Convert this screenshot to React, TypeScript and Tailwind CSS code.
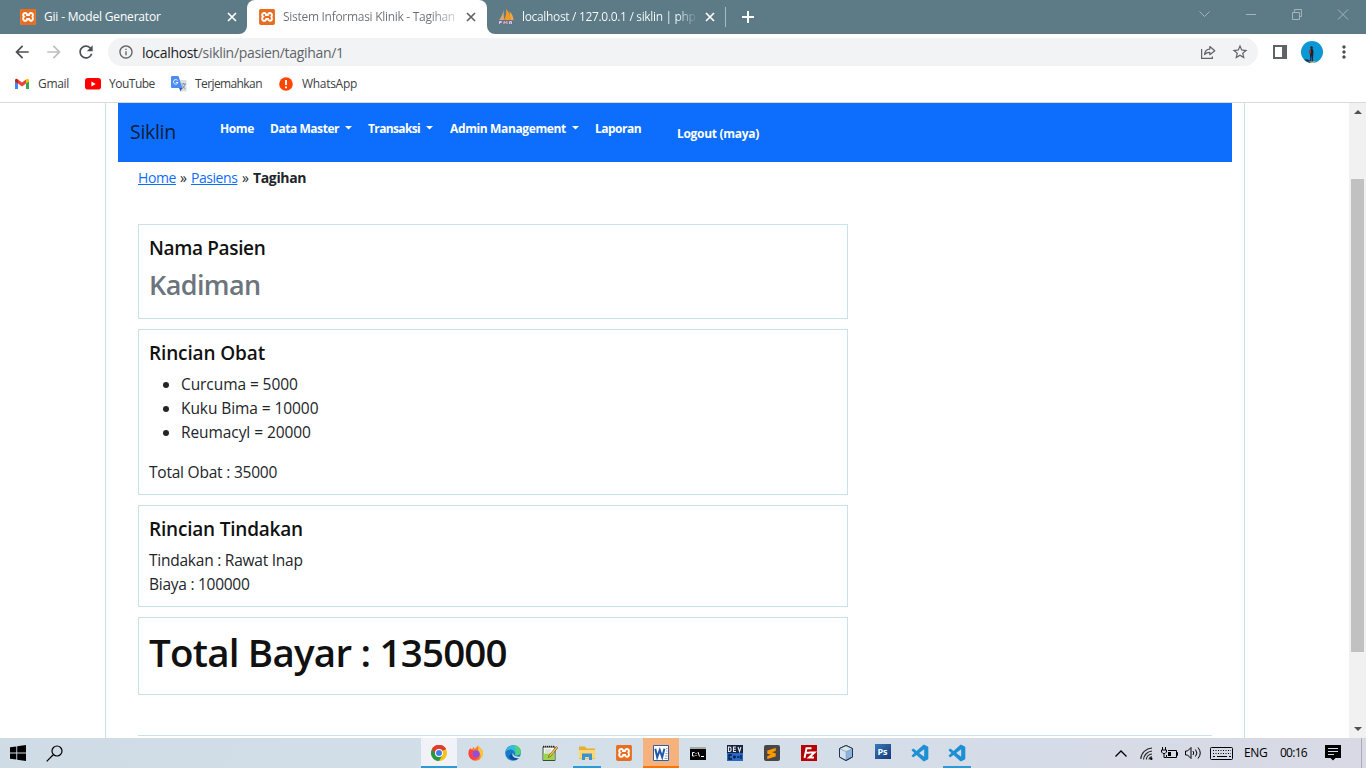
import React from "react";
import type { ReactNode } from "react";
import { MdArrowBack, MdArrowForward, MdRefresh, MdInfoOutline, MdStarBorder, MdMoreVert } from "react-icons/md";
import { SiXampp, SiSublimetext } from "react-icons/si";
import { BiLogoVisualStudio } from "react-icons/bi";

function Xampp() {
  return (
    <span className="flex size-4 shrink-0 items-center justify-center rounded-[3px] bg-white">
      <SiXampp className="size-4 text-[#ea6d1f]" />
    </span>
  );
}

function Close({ className }: { className: string }) {
  return (
    <svg viewBox="0 0 10 10" className={"size-[10px] shrink-0 " + className} fill="none" stroke="currentColor" strokeWidth="1.7">
      <path d="M1 1l8 8M9 1l-8 8" />
    </svg>
  );
}

function PhpMyAdmin() {
  return (
    <svg viewBox="0 0 16 16" className="size-4 shrink-0">
      <path d="M5.500 1C5 5 3 8 1 11.500h5z" fill="#d9a677" />
      <path d="M8 0c3.500 3 4.500 7 4 11.500H6c2-4.500 2.500-7.500 2-11.500z" fill="#f79a1c" />
      <path d="M11.500 2.500c2.800 2.500 4 5.500 4 9h-3z" fill="#f5a742" />
      <path d="M1.500 11h13.500l.5 4.500H.5z" fill="#6d6b8e" />
      <path d="M1.500 15v-2.500h2v1h-2M6 15v-2.500l1.500 1.200L9 12.500V15M11.500 15v-2.500h2V15m-2-1h2" fill="none" stroke="#e4e1e6" strokeWidth=".8" />
    </svg>
  );
}

function TabStrip() {
  return (
    <div className="flex h-[34px] shrink-0 bg-[#5d7b87] text-[12px] text-white">
      <div className="flex w-[247px] items-center rounded-br-lg pr-[10px] pl-5">
        <Xampp />
        <span className="ml-2 grow tracking-[-0.19px] whitespace-nowrap">Gii - Model Generator</span>
        <Close className="text-white" />
      </div>
      <div className="relative flex w-[240px] items-center rounded-t-lg bg-white pr-[11px] pl-3 text-[#5f6368]">
        <svg viewBox="0 0 8 8" className="absolute bottom-0 -left-2 size-2"><path d="M8 0v8H0a8 8 0 0 0 8-8z" fill="#fff" /></svg>
        <svg viewBox="0 0 8 8" className="absolute -right-2 bottom-0 size-2"><path d="M0 0v8h8a8 8 0 0 1-8-8z" fill="#fff" /></svg>
        <Xampp />
        <span className="ml-2 w-[173px] overflow-hidden bg-linear-to-r from-[#6b6f73] from-85% to-[#d5d6d8] bg-clip-text tracking-[-0.29px] whitespace-nowrap text-transparent">
          Sistem Informasi Klinik - Tagihan
        </span>
        <Close className="ml-auto text-[#5f6368]" />
      </div>
      <div className="flex w-[238px] items-center pr-[10px] pl-[11px]">
        <PhpMyAdmin />
        <span className="ml-2 w-[176px] overflow-hidden bg-linear-to-r from-white from-88% to-[#5d7b87] bg-clip-text tracking-[-0.33px] whitespace-nowrap text-transparent">
          localhost / 127.0.0.1 / siklin | php
        </span>
        <Close className="ml-auto text-white" />
      </div>
      <div className="mt-[7px] h-5 w-px bg-[#a9bac1]" />
      <svg viewBox="0 0 12 12" className="mt-[11px] ml-4 size-3" stroke="#fff" strokeWidth="2">
        <path d="M6 0v12M0 6h12" />
      </svg>
      <svg viewBox="0 0 160 16" className="mt-[6px] mr-[13px] ml-auto h-4 w-[160px]" fill="none" stroke="#a3b4bb">
        <path d="M6.500 5.500l5 5 5-5M53 8.500h10M99.500 6.500h7v7h-7zM101.500 6v-2.500h7v7h-2M145 3.500l10 10M155 3.500l-10 10" />
      </svg>
    </div>
  );
}

function Toolbar() {
  return (
    <div className="flex h-9 shrink-0 items-center bg-white text-[#5f6368]">
      <MdArrowBack className="ml-3 size-5 text-[#4b4f53]" />
      <MdArrowForward className="ml-3 size-5 text-[#bdbfc1]" />
      <MdRefresh className="ml-3 size-5 text-[#4b4f53]" />
      <div className="ml-3 flex h-7 w-[1150px] items-center rounded-full bg-[#f1f3f4]">
        <MdInfoOutline className="ml-[10px] size-4" />
        <span className="ml-2 text-[14px] tracking-[-0.32px] whitespace-nowrap">
          <span className="text-[#202124]">localhost</span>/siklin/pasien/tagihan/1
        </span>
        <svg viewBox="0 0 16 16" className="ml-auto size-4" fill="none" stroke="#5f6368" strokeWidth="1.2">
          <path d="M1.600 5v9.400h10.800v-1.900" />
          <path d="M4.500 10.500C5 7 7 5.300 9.800 5.200V2.500L14.800 6.700l-5 4V8.300C7.500 8.200 6 9 4.500 10.500z" strokeLinejoin="round" />
        </svg>
        <MdStarBorder className="mr-[9px] ml-[15px] size-[18px]" />
      </div>
      <svg viewBox="0 0 14 14" className="ml-[15px] size-[14px]">
        <path d="M0 0h14v14H0zM2 2v10h7V2z" fill="#5f6368" fillRule="evenodd" />
      </svg>
      <svg viewBox="0 0 22 22" className="ml-[14px] size-[22px]">
        <circle cx="11" cy="11" r="11" fill="#0b98d4" />
        <path d="M3 18.500q3-.8 5 .5t5 .5l-2 2.500a11 11 0 0 1-8-3.500z" fill="#1b3b4a" />
        <path d="M8 20.200q4 .8 7 0-1.500 1.800-4 1.800-2 0-3-1.800z" fill="#d9c2a4" />
        <circle cx="10.500" cy="6.500" r="1.300" fill="#2a2530" />
        <path d="M9.500 7.500h2.200l.8 3.500-.7 9H11l-.4-6-.5 6h-.8l-.4-9z" fill="#1c2230" />
        <path d="M8 9.800l2-1.800v4.500H8z" fill="#a32e2e" />
      </svg>
      <MdMoreVert className="ml-[11px] size-5 text-[#4b4f53]" />
    </div>
  );
}

function Bookmarks() {
  return (
    <div className="flex h-[33px] shrink-0 items-center border-b border-[#d8dbdc] bg-white pb-[5px] text-[12px] text-[#3c4043]">
      <svg viewBox="0 0 14 12" className="ml-[15px] h-3 w-[14px]">
        <path d="M0 2v9h3V4z" fill="#4285f4" />
        <path d="M11 4v7h3V2z" fill="#34a853" />
        <path d="M3 1.500l4 3 4-3V5.500L7 8.500l-4-3z" fill="#ea4335" />
        <path d="M0 2.500C0 .5 2 .3 3 1.500v4L0 3.500z" fill="#c5221f" />
        <path d="M14 2.500C14 .5 12 .3 11 1.500v4l3-2z" fill="#fbbc04" />
      </svg>
      <span className="ml-[9px] w-[47px] tracking-[-0.3px]">Gmail</span>
      <svg viewBox="0 0 16 12" className="h-3 w-4">
        <rect width="16" height="11.500" rx="2.800" fill="#f00" />
        <path d="M6.400 3.400v5l4.300-2.500z" fill="#fff" />
      </svg>
      <span className="ml-2 w-[62px] tracking-[-0.5px]">YouTube</span>
      <svg viewBox="0 0 16 16" className="size-4">
        <path d="M6 4h8.500a1 1 0 0 1 1 1v10.500H9.500z" fill="#dcdfe2" />
        <path d="M8 11.500h3.500l-2 4z" fill="#3052b5" />
        <path d="M1 0h6.500l3.800 12H1a1 1 0 0 1-1-1V1a1 1 0 0 1 1-1z" fill="#4b8bf5" />
        <path d="M6.700 4.600A2.300 2.300 0 1 0 7 6.500H4.800" fill="none" stroke="#fff" strokeWidth=".9" />
        <path d="M10.500 8h4.500M12.600 7v1M14 8c-.5 2.500-1.800 4-3 5M11.500 9.500c.8 1.700 2 2.800 3 3.500" fill="none" stroke="#71818b" strokeWidth=".8" />
      </svg>
      <span className="ml-2 w-[84px] tracking-[-0.6px]">Terjemahkan</span>
      <svg viewBox="0 0 14 14" className="size-[14px]">
        <circle cx="7" cy="7" r="6.800" fill="#ff4500" />
        <path d="M6 3h2v5H6zM6 9.500h2v1.800H6z" fill="#fff" />
      </svg>
      <span className="ml-[9px] tracking-[-0.3px]">WhatsApp</span>
    </div>
  );
}

function Caret() {
  return (
    <svg viewBox="0 0 7 4" className="mt-[-2px] ml-[6px] h-1 w-[7px]">
      <path d="M0 0h7L3.500 3.600z" fill="#fff" />
    </svg>
  );
}

function NavBar() {
  return (
    <nav className="flex h-[59px] shrink-0 bg-[#0d6efd] text-[12px] leading-[18px] font-bold text-white">
      <span className="mt-[15px] ml-3 w-[90px] text-[19.5px] leading-7 font-normal tracking-[-0.3px] text-[#0b1d3a]">Siklin</span>
      <span className="mt-[17px] w-[50px] tracking-[-0.37px]">Home</span>
      <span className="mt-[17px] flex h-[18px] w-[98px] items-center">
        <span className="w-[69px] tracking-[-0.45px] whitespace-nowrap">Data Master</span>
        <Caret />
      </span>
      <span className="mt-[17px] flex h-[18px] w-[82px] items-center">
        <span className="w-[52px] tracking-[-0.63px] whitespace-nowrap">Transaksi</span>
        <Caret />
      </span>
      <span className="mt-[17px] flex h-[18px] w-[145px] items-center">
        <span className="w-[116px] tracking-[-0.37px] whitespace-nowrap">Admin Management</span>
        <Caret />
      </span>
      <span className="mt-[17px] w-[82px] tracking-[-0.5px]">Laporan</span>
      <span className="mt-[22px] tracking-[-0.3px]">Logout (maya)</span>
    </nav>
  );
}

function Card({ children }: { children: ReactNode }) {
  return <section className="mb-[10px] w-[710px] border border-[#c9e0ed] p-[10px]">{children}</section>;
}

function Page() {
  return (
    <div className="flex min-h-0 grow overflow-hidden bg-white">
      <div className="ml-[105px] flex w-[1140px] flex-col border-x border-[#c9e0ed] px-3 text-[#212529]">
        <NavBar />
        <div className="flex h-[62px] shrink-0 px-5 pt-[6px] text-[14px] leading-5 whitespace-pre">
          <span className="w-[38px] tracking-[-0.4px] text-[#0d6efd] underline">Home</span>
          <span className="w-[15px] text-center">»</span>
          <span className="w-[47px] tracking-[-0.45px] text-[#0d6efd] underline">Pasiens</span>
          <span className="w-[15px] text-center">»</span>
          <span className="font-bold tracking-[-0.35px]">Tagihan</span>
        </div>
        <div className="flex flex-col pl-5 text-[15.5px] leading-6">
          <Card>
            <h4 className="mb-2 pt-[2px] text-[19px] leading-[22px] font-semibold tracking-[-0.35px] text-[#111]">Nama Pasien</h4>
            <h3 className="mb-2 pt-[2px] text-[27px] leading-[31px] font-semibold tracking-[-0.6px] text-[#6c757d]">Kadiman</h3>
          </Card>
          <Card>
            <h4 className="mb-2 pt-[2px] text-[19px] leading-[22px] font-semibold tracking-[-0.13px] text-[#111]">Rincian Obat</h4>
            <ul className="mb-4 list-disc pl-8 tracking-[-0.08px]">
              <li>Curcuma = 5000</li>
              <li>Kuku Bima = 10000</li>
              <li>Reumacyl = 20000</li>
            </ul>
            <p className="tracking-[-0.22px]">Total Obat : 35000</p>
          </Card>
          <Card>
            <h4 className="mb-2 pt-[2px] text-[19px] leading-[22px] font-semibold tracking-[-0.2px] text-[#111]">Rincian Tindakan</h4>
            <p className="tracking-[-0.24px]">Tindakan : Rawat Inap</p>
            <p className="tracking-[-0.26px]">Biaya : 100000</p>
          </Card>
          <Card>
            <h1 className="mb-2 pt-px text-[38.5px] leading-[47px] font-semibold tracking-[-0.78px] text-[#111]">Total Bayar : 135000</h1>
          </Card>
        </div>
        <div className="mx-5 mt-[30px] h-px shrink-0 bg-[#c9e0ed]" />
      </div>
      <div className="ml-auto flex w-[17px] flex-col items-center bg-[#f1f1f1]">
        <svg viewBox="0 0 8 4" className="mt-[7px] h-1 w-2"><path d="M0 4l4-4 4 4z" fill="#505050" /></svg>
        <div className="mt-[65px] h-[473px] w-[13px] bg-[#c1c1c1]" />
        <svg viewBox="0 0 8 4" className="mt-[75px] h-1 w-2"><path d="M0 0l4 4 4-4z" fill="#505050" /></svg>
      </div>
    </div>
  );
}

function Slot({ children, tone = "border-transparent" }: { children: ReactNode; tone?: string }) {
  return (
    <div className="flex w-[37px] justify-center">
      <div className={"flex h-[30px] items-center justify-center border-b-2 pt-[2px] " + tone}>{children}</div>
    </div>
  );
}

function TaskIcons() {
  return (
    <div className="ml-[357px] flex">
      <Slot tone="w-9 shrink-0 bg-[#f0f2f7] border-[#2b9bd7]">
        <svg viewBox="0 0 16 16" className="size-4">
          <circle cx="8" cy="8" r="8" fill="#fbc116" />
          <path d="M8 8L1.070 4A8 8 0 0 1 14.930 4z" fill="#e33b2e" />
          <path d="M8 8L1.070 4A8 8 0 0 0 8 16l3.500-6z" fill="#229a4a" />
          <path d="M8 4.300h7.050A8 8 0 0 0 1.070 4L4.800 10z" fill="#e33b2e" />
          <circle cx="8" cy="8" r="4" fill="#fff" />
          <circle cx="8" cy="8" r="3" fill="#3f7ee8" />
        </svg>
      </Slot>
      <Slot>
        <svg viewBox="0 0 16 16" className="size-4">
          <path d="M1 5l1.500-2L4 4.500 5.500 2 7 4l3-3.500L13 4l1.500 1.500A8 8 0 0 1 8 15.800 7.600 7.600 0 0 1 1 5z" fill="#ff7a25" />
          <path d="M10 .5l3 3.500 1.800 2c1 5-1.500 8-4 9 2.500-3 2.500-6-.5-8z" fill="#ffc53a" />
          <circle cx="8" cy="9" r="3.700" fill="#8e4fe0" />
          <path d="M1 5c2-1 4 0 5.500 2C4.500 7 4 8 4.300 9.500c.5 2.500 3.500 4 6 2.500C8 17 1 15 .8 9z" fill="#ff3f50" />
        </svg>
      </Slot>
      <Slot>
        <svg viewBox="0 0 16 16" className="size-4">
          <circle cx="8" cy="8" r="7.800" fill="#1679cc" />
          <path d="M.5 7C1.500 2.500 5 .2 8.500.2c5 0 8 4 7.300 7.300-.7 3-4.500 3.500-6 2.500C11 8 9 4.500 5.500 4.500 3 4.500 1.200 5.800.5 7z" fill="#35bed3" />
          <path d="M8.500.2c5 0 8 4 7.300 7.300-.7 3-4.500 3.500-6 2.500C12 6.500 11 3 8.500.2z" fill="#52d177" />
          <path d="M6.500 8.500c0 3 3 5.300 7.500 4.300C11 16.500 5 15.500 4 11.500z" fill="#0c4f9d" />
          <path d="M8.500 7c-1.500 2.500 1.500 5.500 7 4.500l-1 1.500C9.500 14 5.500 10.500 8.500 7z" fill="#d9e4ed" />
        </svg>
      </Slot>
      <Slot>
        <svg viewBox="0 0 16 16" className="size-4">
          <path d="M1 2h12v13.500H1z" fill="#f4f6f2" stroke="#3f453f" />
          <path d="M1.500 8.500h11v6.500h-11z" fill="#9ad64a" />
          <path d="M1 1.500h12" stroke="#222" strokeWidth="1.600" strokeDasharray="1 1" />
          <path d="M3 5h6M3 7h5" stroke="#b5beb5" strokeWidth=".8" />
          <path d="M14.300 1.500l1.500 1.300L8.500 11.500l-2 1 .5-2.300z" fill="#f2c53f" stroke="#7a3b20" strokeWidth=".6" />
        </svg>
      </Slot>
      <Slot tone="w-7 border-[#2b9bd7]">
        <svg viewBox="0 0 16 16" className="size-4">
          <path d="M0 1.500h6l1.500 2H16V14H0z" fill="#e9ad35" />
          <path d="M0 5h16v8.500H0z" fill="#ffd76a" />
          <path d="M3 8.500h10V15h-3v-3H6v3H3z" fill="#3b91d9" />
        </svg>
      </Slot>
      <Slot><Xampp /></Slot>
      <Slot tone="w-9 shrink-0 bg-[#f6b27c] border-[#ff7300]">
        <svg viewBox="0 0 16 16" className="size-4">
          <path d="M.5.5h15v15H.5z" fill="#fff" stroke="#2c5fa8" />
          <path d="M13 3.500h1.500M13 6h1.500M12.500 8.500h2M12 11h2.500M11.500 13.500h3" stroke="#7ba0d2" />
          <path d="M2.300 3.800l1.900 8.400L6.800 5l2.400 7.200 2.200-8.400" fill="none" stroke="#2158a8" strokeWidth="2" />
        </svg>
      </Slot>
      <Slot>
        <svg viewBox="0 0 16 13" className="h-[13px] w-4">
          <path d="M0 0h16v13H0z" fill="#050505" />
          <path d="M0 0h16v2H0z" fill="#a8a8a8" />
          <path d="M4.500 5.500H2.500v3.500h2M6 6v1M6 8v1M8 5l1.500 4.500M11 9.500h3" fill="none" stroke="#fff" />
        </svg>
      </Slot>
      <Slot>
        <svg viewBox="0 0 16 16" className="size-4">
          <path d="M0 0h16v16H0z" fill="#17233f" />
          <path d="M0 8h16v8H0z" fill="#2569c9" />
          <path d="M1.500 2v4.500h1.500l1-1V3L3 2zM9 2H6.500v4.500H9M6.500 4.200H9M11 2l1.500 4.500L14 2" fill="none" stroke="#e6eaf0" strokeWidth="1.100" />
          <path d="M5 10H2v4h3M6 12h3M7.500 10.500v3M10 12h2.500M14 10v4" fill="none" stroke="#0d1a3a" strokeWidth="1.300" />
        </svg>
      </Slot>
      <Slot>
        <span className="flex size-4 items-center justify-center rounded-[2px] bg-[#474747]">
          <SiSublimetext className="size-[11px] text-[#ff9800]" />
        </span>
      </Slot>
      <Slot>
        <svg viewBox="0 0 16 16" className="size-4">
          <path d="M0 0h16v16H0z" fill="#b80000" />
          <path d="M10.500 3.200H5.500L3.500 13M4.500 7.800h4M8.500 7.500h5L8 12.500h5" fill="none" stroke="#fff" strokeWidth="1.900" />
        </svg>
      </Slot>
      <Slot>
        <svg viewBox="0 0 16 16" className="size-4" stroke="#23344f" strokeWidth="1" strokeLinejoin="round">
          <path d="M8 .5l6.500 3v8.500L8 15.500 1.500 12V3.500z" fill="#8fb2dc" />
          <path d="M1.500 3.500L8 6.500v9L1.500 12z" fill="#d3e2f0" stroke="#7a93b3" strokeWidth=".5" />
          <path d="M8 .5l6.500 3L8 6.500l-6.500-3z" fill="#dbe8e0" stroke="#7a93b3" strokeWidth=".5" />
          <path d="M8 .5l6.500 3v8.500L8 15.500 1.500 12V3.500z" fill="none" />
        </svg>
      </Slot>
      <Slot>
        <span className="mb-[3px] flex h-[15px] w-4 items-center justify-center bg-linear-to-br from-[#3a78bd] to-[#153a78] text-[9px] leading-none font-bold text-white">Ps</span>
      </Slot>
      <Slot><BiLogoVisualStudio className="size-[20px] text-[#1d8fd4]" /></Slot>
      <Slot tone="w-7 border-[#2b9bd7]"><BiLogoVisualStudio className="size-[20px] text-[#1d8fd4]" /></Slot>
    </div>
  );
}

function Taskbar() {
  return (
    <div className="flex h-[30px] shrink-0 items-center bg-linear-to-r from-[#cfdbe5] via-[#d3dfe9] to-[#d8d9e5] text-[12px] text-black">
      <svg viewBox="0 0 16 16" className="ml-[10px] size-4">
        <path d="M0 2.300L6.300 1.400V7.500H0zM7.200 1.300L16 0v7.500H7.200zM0 8.500h6.300v6.100L0 13.700zM7.200 8.500H16V16l-8.800-1.300z" />
      </svg>
      <svg viewBox="0 0 17 17" className="ml-[20px] size-[17px]" fill="none" stroke="#000" strokeWidth="1.200">
        <circle cx="11" cy="6" r="5" />
        <path d="M7.500 9.500L.7 16.300" />
      </svg>
      <TaskIcons />
      <div className="ml-auto flex items-center">
        <svg viewBox="0 0 12 7" className="h-[7px] w-3" fill="none" stroke="#000" strokeWidth="1.300"><path d="M.5 6.500L6 1l5.500 5.500" /></svg>
        <svg viewBox="0 0 13 13" className="ml-[13px] size-[13px]" fill="none" stroke="#222" strokeWidth="1.100">
          <path d="M.8 12C1 6 6 1.500 12 1M3.500 12.500C3.800 8 7.500 4.500 12 4M6.300 12.500c.2-3 2.700-5.300 5.700-5.500M9 12.500c.2-1.500 1.500-2.700 3-2.800" />
          <circle cx="11.300" cy="11.800" r="1.200" fill="#000" stroke="none" />
        </svg>
        <svg viewBox="0 0 17 13" className="ml-[8px] h-[13px] w-[17px]" fill="none" stroke="#000">
          <path d="M7 3.500h8.500v7H5.500V8M15.500 5.500H16.500v3h-1" />
          <path d="M7 5h3v4H7z" fill="#000" stroke="none" />
          <path d="M1.500 0v3M4.500 0v3M.5 3h5v2L4 6.500H2L.5 5zM3 6.500V10.500h2" />
        </svg>
        <svg viewBox="0 0 17 14" className="ml-[7px] h-[14px] w-[17px]" fill="none" stroke="#000">
          <path d="M.5 5h2L6 1.500v11L2.500 9h-2z" />
          <path d="M8 5q1.500 2 0 4M10.500 3.500q2.800 3.500 0 7M13 1.500q4.500 5.500 0 11" />
        </svg>
        <svg viewBox="0 0 23 13" className="ml-[8px] h-[13px] w-[23px]" fill="none" stroke="#000">
          <rect x=".5" y=".5" width="22" height="12" rx="1" />
          <path d="M3 3.500h18M3 6.500h18" strokeDasharray="1 1.500" />
          <path d="M3 9.500h2M7 9.500h10M19 9.500h2" />
        </svg>
        <span className="ml-[11px] w-[36px] tracking-[-0.4px]">ENG</span>
        <span className="w-[45px] tracking-[-0.75px]">00:16</span>
        <svg viewBox="0 0 16 16" className="size-4">
          <path d="M0 0h16v13h-5.500L8 15.500 5.500 13H0z" />
          <path d="M3 3.500h10M3 6.500h10M3 9.500h6" stroke="#d7dae6" />
        </svg>
        <div className="ml-[20px] h-[30px] w-px bg-[#a9adb8]" />
        <div className="w-1" />
      </div>
    </div>
  );
}

export default function App() {
  return (
    <div className="flex h-screen w-full flex-col overflow-hidden bg-white font-['Open_Sans',sans-serif]">
      <TabStrip />
      <Toolbar />
      <Bookmarks />
      <Page />
      <Taskbar />
    </div>
  );
}
